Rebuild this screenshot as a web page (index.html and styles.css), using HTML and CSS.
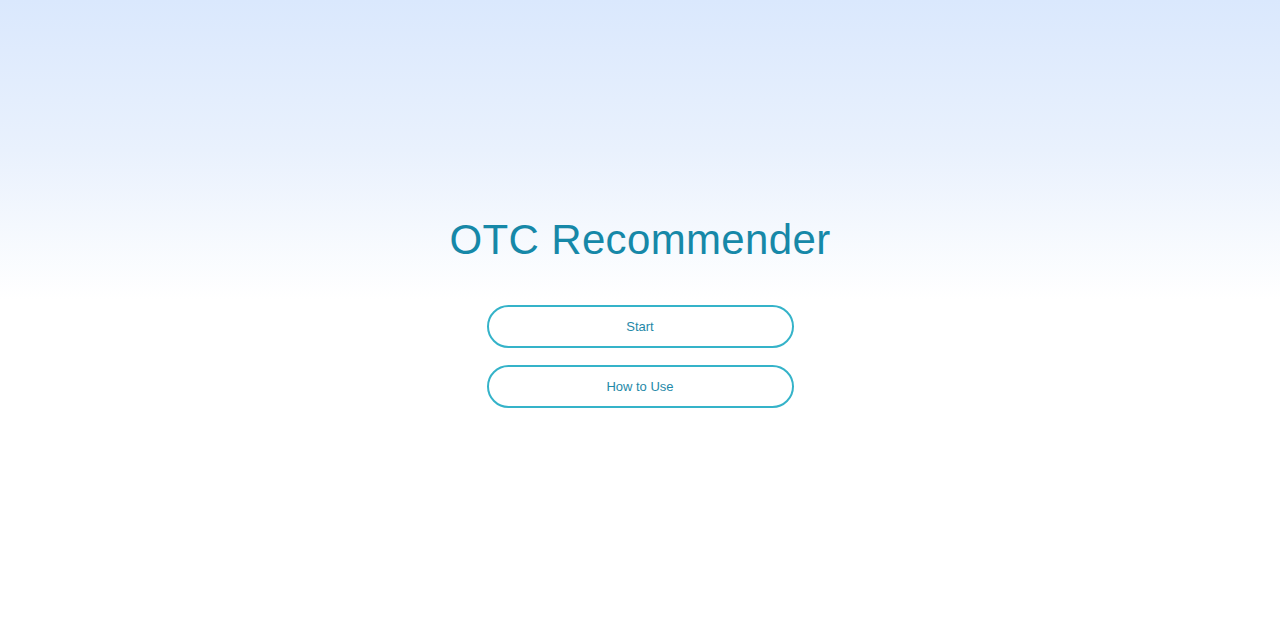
FILE: index.html
```html
<!DOCTYPE html>
<html lang="en">
<head>
<meta charset="utf-8">
<title>OTC Recommender</title>
<link rel="stylesheet" href="styles.css">
</head>
<body>
<main class="home">
  <h1 class="title">OTC Recommender</h1>
  <div class="actions">
    <button class="btn">Start</button>
    <button class="btn">How to Use</button>
  </div>
</main>
</body>
</html>
```

FILE: styles.css
```css
html, body {
  margin: 0;
  padding: 0;
}
body {
  min-height: 100vh;
  background: linear-gradient(to bottom, #dae8fd 0px, #e9f1fd 150px, #ffffff 300px, #ffffff 100%);
  font-family: "Liberation Sans", Arial, sans-serif;
}
.home {
  display: flex;
  flex-direction: column;
  align-items: center;
  padding-top: 216px;
}
.title {
  margin: 0;
  font-size: 42px;
  font-weight: normal;
  line-height: 48px;
  color: #1688a8;
  letter-spacing: 0.35px;
}
.actions {
  display: flex;
  flex-direction: column;
  gap: 17px;
  margin-top: 41px;
}
.btn {
  width: 307px;
  height: 43px;
  box-sizing: border-box;
  border: 2px solid #35b3c9;
  border-radius: 22px;
  background: #ffffff;
  color: #1f89a8;
  font-family: "Liberation Sans", Arial, sans-serif;
  font-size: 13px;
  cursor: pointer;
}
```
